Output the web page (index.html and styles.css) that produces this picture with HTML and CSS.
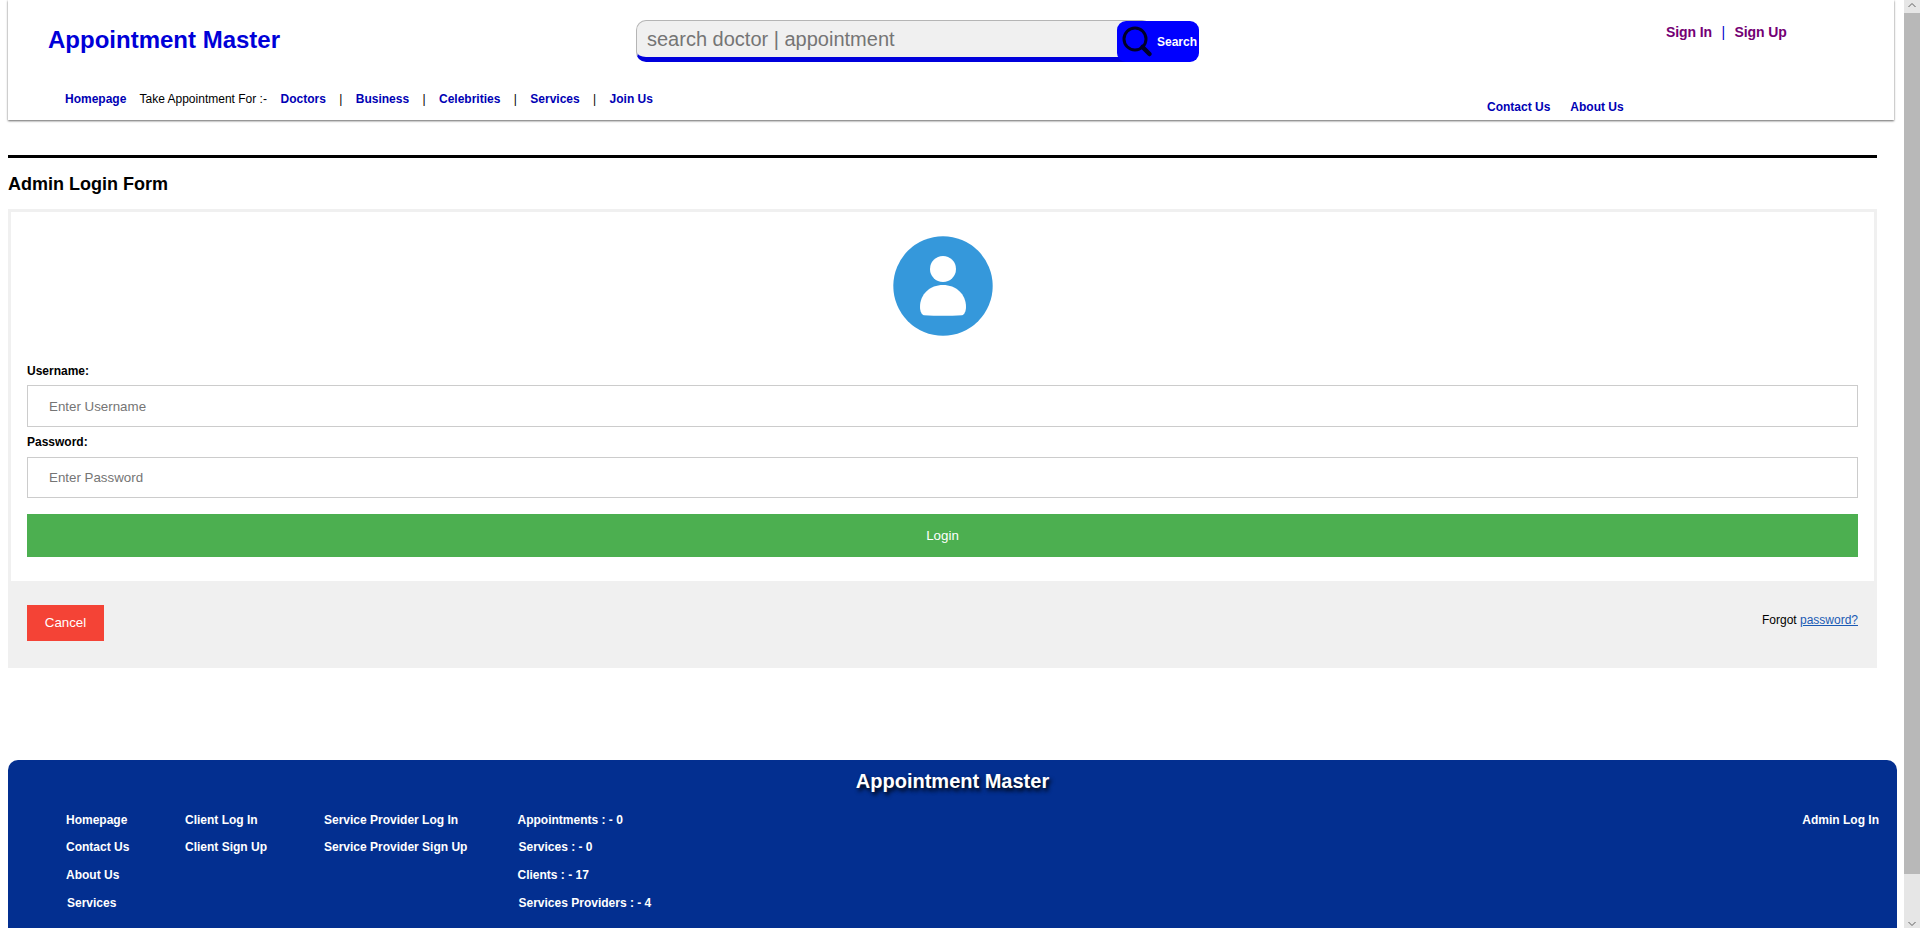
FILE: index.html
```
<!DOCTYPE html>
<html lang="en">
<head>
<meta charset="utf-8">
<title>Appointment Master</title>
<link rel="stylesheet" href="styles.css">
</head>
<body>
<div class="page">
  <header class="header">
    <div class="header-top">
      <a class="brand">Appointment Master</a>
      <form class="search">
        <input class="search-input" type="text" placeholder="search doctor | appointment">
        <button class="search-button" type="button">
          <svg class="search-icon" viewBox="0 0 32 32" width="32" height="32"><circle cx="14" cy="13" r="11" fill="none" stroke="#000028" stroke-width="3"/><path d="M21.500 21L28.500 28" stroke="#000028" stroke-width="4.500" stroke-linecap="round"/></svg>
          <span>Search</span>
        </button>
      </form>
      <div class="account"><a>Sign In</a><span class="account-bar">|</span><a>Sign Up</a></div>
    </div>
    <div class="header-bottom">
      <nav class="nav">
        <a class="nav-home">Homepage</a>
        <span class="nav-label">Take Appointment For :-</span>
        <a>Doctors</a><span class="bar">|</span>
        <a>Business</a><span class="bar">|</span>
        <a>Celebrities</a><span class="bar">|</span>
        <a>Services</a><span class="bar">|</span>
        <a>Join Us</a>
      </nav>
      <nav class="side-nav"><a>Contact Us</a><a>About Us</a></nav>
    </div>
  </header>
  <main class="main">
    <h2 class="heading">Admin Login Form</h2>
    <form class="login">
      <div class="fields">
        <svg class="avatar" viewBox="0 0 100 100" width="100" height="100"><circle cx="50" cy="50" r="49.700" fill="#3598db"/><circle cx="50" cy="33" r="13" fill="#fff"/><path d="M31 79.300C28.500 78.500 27 75 27 71C27 58 37 49 50 49S73 58 73 71C73 75 71.500 78.500 69 79.300Q50 80.300 31 79.300Z" fill="#fff"/></svg>
        <label class="label" for="user">Username:</label>
        <input class="field user" id="user" type="text" placeholder="Enter Username">
        <label class="label" for="pass">Password:</label>
        <input class="field" id="pass" type="password" placeholder="Enter Password">
        <button class="submit" type="button">Login</button>
      </div>
      <div class="actions">
        <button class="cancel" type="button">Cancel</button>
        <span class="forgot">Forgot <a>password?</a></span>
      </div>
    </form>
  </main>
  <footer class="footer">
    <h2 class="footer-title">Appointment Master</h2>
    <div class="footer-links">
      <div class="col col-home"><a>Homepage</a><a>Contact Us</a><a>About Us</a><a class="nudge">Services</a></div>
      <div class="col col-client"><a>Client Log In</a><a>Client Sign Up</a></div>
      <div class="col col-provider"><a>Service Provider Log In</a><a>Service Provider Sign Up</a></div>
      <div class="col"><span>Appointments : - 0</span><span class="nudge">Services : - 0</span><span>Clients : - 17</span><span class="nudge">Services Providers : - 4</span></div>
      <a class="admin">Admin Log In</a>
    </div>
  </footer>
</div>
<div class="scrollbar">
  <svg class="arrow" viewBox="0 0 16 13" width="16" height="13"><path d="M4.500 7L8 3.500L11.500 7" fill="none" stroke="#606060"/></svg>
  <div class="thumb"></div>
  <svg class="arrow" viewBox="0 0 16 13" width="16" height="13"><path d="M4.500 7L8 10.500L11.500 7" fill="none" stroke="#606060"/></svg>
</div>
</body>
</html>
```
FILE: styles.css
```
* { box-sizing: border-box; }
body {
  margin: 0;
  height: 928px;
  overflow: hidden;
  display: flex;
  background: #fff;
  color: #000;
  font: 12px/14px "Liberation Sans", Arial, sans-serif;
}
button, input { font-family: inherit; margin: 0; }
.page { width: 1904px; height: 928px; padding-left: 8px; overflow: hidden; }

.header {
  width: 1886px;
  height: 120px;
  box-shadow: 0 1px 2px rgba(0, 0, 0, .6);
}
.header-top { display: flex; height: 92px; padding-left: 40px; }
.brand {
  width: 588px;
  padding-top: 26px;
  font-size: 24px;
  line-height: 28px;
  font-weight: bold;
  color: #0000d8;
}
.search { display: flex; width: 563px; height: 42px; margin: 20px 467px 0 0; }
.search-input {
  width: 516px;
  height: 42px;
  padding: 0 10px;
  border: 1px solid #b5b5b5;
  border-bottom: 5px solid #0000dc;
  border-radius: 10px;
  background: #f0f0f0;
  font-size: 20px;
}
.search-input::placeholder { color: #757575; }
.search-button {
  display: flex;
  align-items: center;
  gap: 4px;
  flex: none;
  width: 82px;
  height: 41px;
  margin: 1px 0 0 -35px;
  padding: 0 0 0 4px;
  border: 0;
  border-radius: 9px;
  background: #00f;
  color: #fff;
  font-size: 12px;
  font-weight: bold;
}
.search-icon { flex: none; }
.account {
  display: flex;
  padding-top: 24px;
  font-size: 14px;
  line-height: 16px;
  font-weight: bold;
  letter-spacing: -.1px;
  color: #740074;
  white-space: nowrap;
}
.account-bar { margin: 0 9.5px; font-weight: normal; color: #00c; }
.header-bottom { display: flex; font-weight: bold; color: #0000b4; white-space: nowrap; }
.nav { display: flex; width: 1479px; padding-left: 57px; }
.nav-home { width: 74.5px; }
.nav-label { width: 141px; font-weight: normal; color: #000; }
.bar { margin: 0 13.4px; font-weight: normal; color: #000; }
.side-nav { display: flex; gap: 20px; padding-top: 8px; }

.main { width: 1869px; margin-top: 35px; border-top: 3px solid #000; }
.heading { margin: 16px 0 14px; font-size: 18px; line-height: 21px; }
.login { height: 459px; border: 3px solid #f0f0f0; border-bottom: 0; }
.fields { display: flex; flex-direction: column; height: 369px; padding: 24px 16px 0; }
.avatar { align-self: center; margin-bottom: 28px; }
.label { font-weight: bold; }
.field {
  width: 100%;
  height: 41px;
  margin: 8px 0 16px;
  padding: 0 21px;
  border: 1px solid #ccc;
  font-size: 13.33px;
}
.field.user { height: 42px; margin: 7px 0 8px; }
.field::placeholder { color: #757575; }
.submit {
  height: 43px;
  padding: 0 0 1px;
  border: 0;
  background: #4caf50;
  color: #fff;
  font-size: 13.33px;
}
.actions {
  display: flex;
  justify-content: space-between;
  align-items: flex-start;
  height: 87px;
  padding: 24px 16px 0;
  background: #f0f0f0;
}
.cancel {
  width: 77px;
  height: 36px;
  padding: 0 0 2px;
  border: 0;
  background: #f44336;
  color: #fff;
  font-size: 13.33px;
}
.forgot { margin-top: 8px; }
.forgot a { color: #1a5ab4; text-decoration: underline; }

.footer {
  width: 1889px;
  height: 180px;
  margin-top: 92px;
  padding-top: 10px;
  border-radius: 10px;
  background: #032f90;
  color: #fff;
}
.footer-title {
  margin: 0 0 20px;
  font-size: 20px;
  line-height: 23px;
  text-align: center;
  text-shadow: 2px 3px 4px #000;
}
.footer-links { display: flex; padding: 0 18px 0 58px; font-weight: bold; white-space: nowrap; }
.col {
  display: grid;
  grid-template-rows: 27px 28px 28px 28px;
}
.col-home { width: 119px; }
.col-client { width: 139px; }
.col-provider { width: 193.5px; }
.nudge { padding-left: 1px; }
.admin { margin-left: auto; }

.scrollbar { display: flex; flex-direction: column; width: 16px; background: #e6e6e6; }
.thumb { height: 861px; margin-bottom: auto; background: #b8b8b8; }
```
